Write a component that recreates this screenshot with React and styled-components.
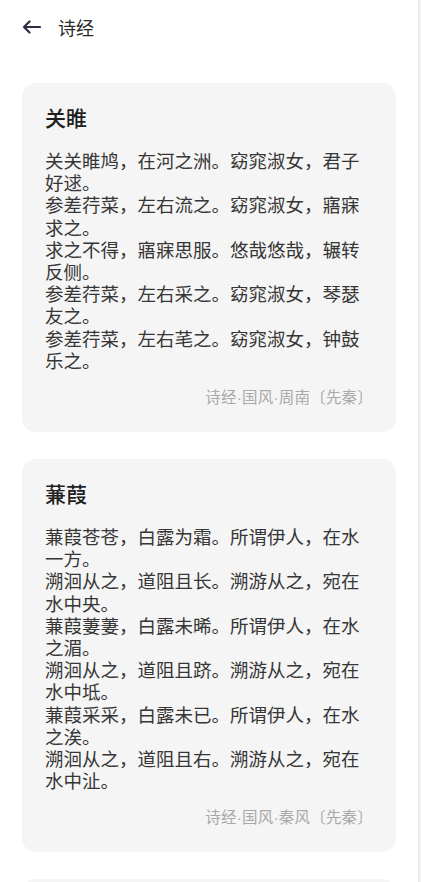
import React from "react";
import styled, { createGlobalStyle } from "styled-components";

const GlobalStyle = createGlobalStyle`
  html, body {
    margin: 0;
    padding: 0;
    overflow: hidden;
    background: #ffffff;
  }
  body {
    font-family: "Noto Sans CJK SC", "Noto Sans", sans-serif;
  }
`;

const Page = styled.div`
  display: flex;
  width: 421px;
  height: 882px;
  overflow: hidden;
  background: #ffffff;
`;

const Main = styled.div`
  flex: 1;
  min-width: 0;
  display: flex;
  flex-direction: column;
`;

const ScrollTrack = styled.div`
  width: 2px;
  flex: none;
  background: #f1f1f1;
  border-left: 1px solid #e8e8e8;
`;

const Header = styled.header`
  height: 53px;
  display: flex;
  align-items: center;
  gap: 17px;
  padding: 0 22px;
  flex: none;
`;

const BackButton = styled.button`
  border: 0;
  background: transparent;
  padding: 0;
  width: 19px;
  height: 14px;
  display: flex;
  align-items: center;
  justify-content: center;
  color: #2c2c46;
  cursor: pointer;
`;

const HeaderTitle = styled.h1`
  margin: 0;
  font-size: 18px;
  line-height: 24px;
  font-weight: 400;
  color: #2a2a2a;
`;

const List = styled.div`
  display: flex;
  flex-direction: column;
  gap: 27px;
  padding: 30px 22px 0 22px;
`;

const Card = styled.article`
  background: #f5f5f5;
  border-radius: 14px;
  padding: 22px 23px 24px 23px;
  display: flex;
  flex-direction: column;
  min-height: ${(p) => (p.$placeholder ? "120px" : "auto")};
`;

const CardTitle = styled.h2`
  margin: 0 0 19px 0;
  font-size: 21px;
  line-height: 25px;
  font-weight: 500;
  color: #1f1f1f;
`;

const Verse = styled.p`
  margin: 0;
  font-size: 18.5px;
  line-height: 22.2px;
  color: #363636;
`;

const Source = styled.div`
  margin-top: 17px;
  text-align: right;
  font-family: "Liberation Sans", "Noto Sans CJK SC", sans-serif;
  font-size: 15.5px;
  line-height: 20px;
  letter-spacing: 0.2px;
  color: #a9a9a9;
`;

const poems = [
  {
    title: "关睢",
    lines: [
      "关关睢鸠，在河之洲。窈窕淑女，君子好逑。",
      "参差荇菜，左右流之。窈窕淑女，寤寐求之。",
      "求之不得，寤寐思服。悠哉悠哉，辗转反侧。",
      "参差荇菜，左右采之。窈窕淑女，琴瑟友之。",
      "参差荇菜，左右芼之。窈窕淑女，钟鼓乐之。",
    ],
    source: "诗经·国风·周南〔先秦〕",
  },
  {
    title: "蒹葭",
    lines: [
      "蒹葭苍苍，白露为霜。所谓伊人，在水一方。",
      "溯洄从之，道阻且长。溯游从之，宛在水中央。",
      "蒹葭萋萋，白露未晞。所谓伊人，在水之湄。",
      "溯洄从之，道阻且跻。溯游从之，宛在水中坻。",
      "蒹葭采采，白露未已。所谓伊人，在水之涘。",
      "溯洄从之，道阻且右。溯游从之，宛在水中沚。",
    ],
    source: "诗经·国风·秦风〔先秦〕",
  },
];

function ArrowLeft() {
  return (
    <svg width="19" height="14" viewBox="0 0 19 14" fill="none">
      <path
        d="M18 7H2M7.5 1.5L2 7l5.5 5.5"
        stroke="currentColor"
        strokeWidth="2.2"
        strokeLinecap="round"
        strokeLinejoin="round"
      />
    </svg>
  );
}

export default function App() {
  return (
    <>
      <GlobalStyle />
      <Page>
        <Main>
          <Header>
            <BackButton aria-label="返回">
              <ArrowLeft />
            </BackButton>
            <HeaderTitle>诗经</HeaderTitle>
          </Header>
          <List>
            {poems.map((p) => (
              <Card key={p.title}>
                <CardTitle>{p.title}</CardTitle>
                {p.lines.map((l, i) => (
                  <Verse key={i}>{l}</Verse>
                ))}
                <Source>{p.source}</Source>
              </Card>
            ))}
            <Card $placeholder aria-hidden="true" />
          </List>
        </Main>
        <ScrollTrack />
      </Page>
    </>
  );
}
